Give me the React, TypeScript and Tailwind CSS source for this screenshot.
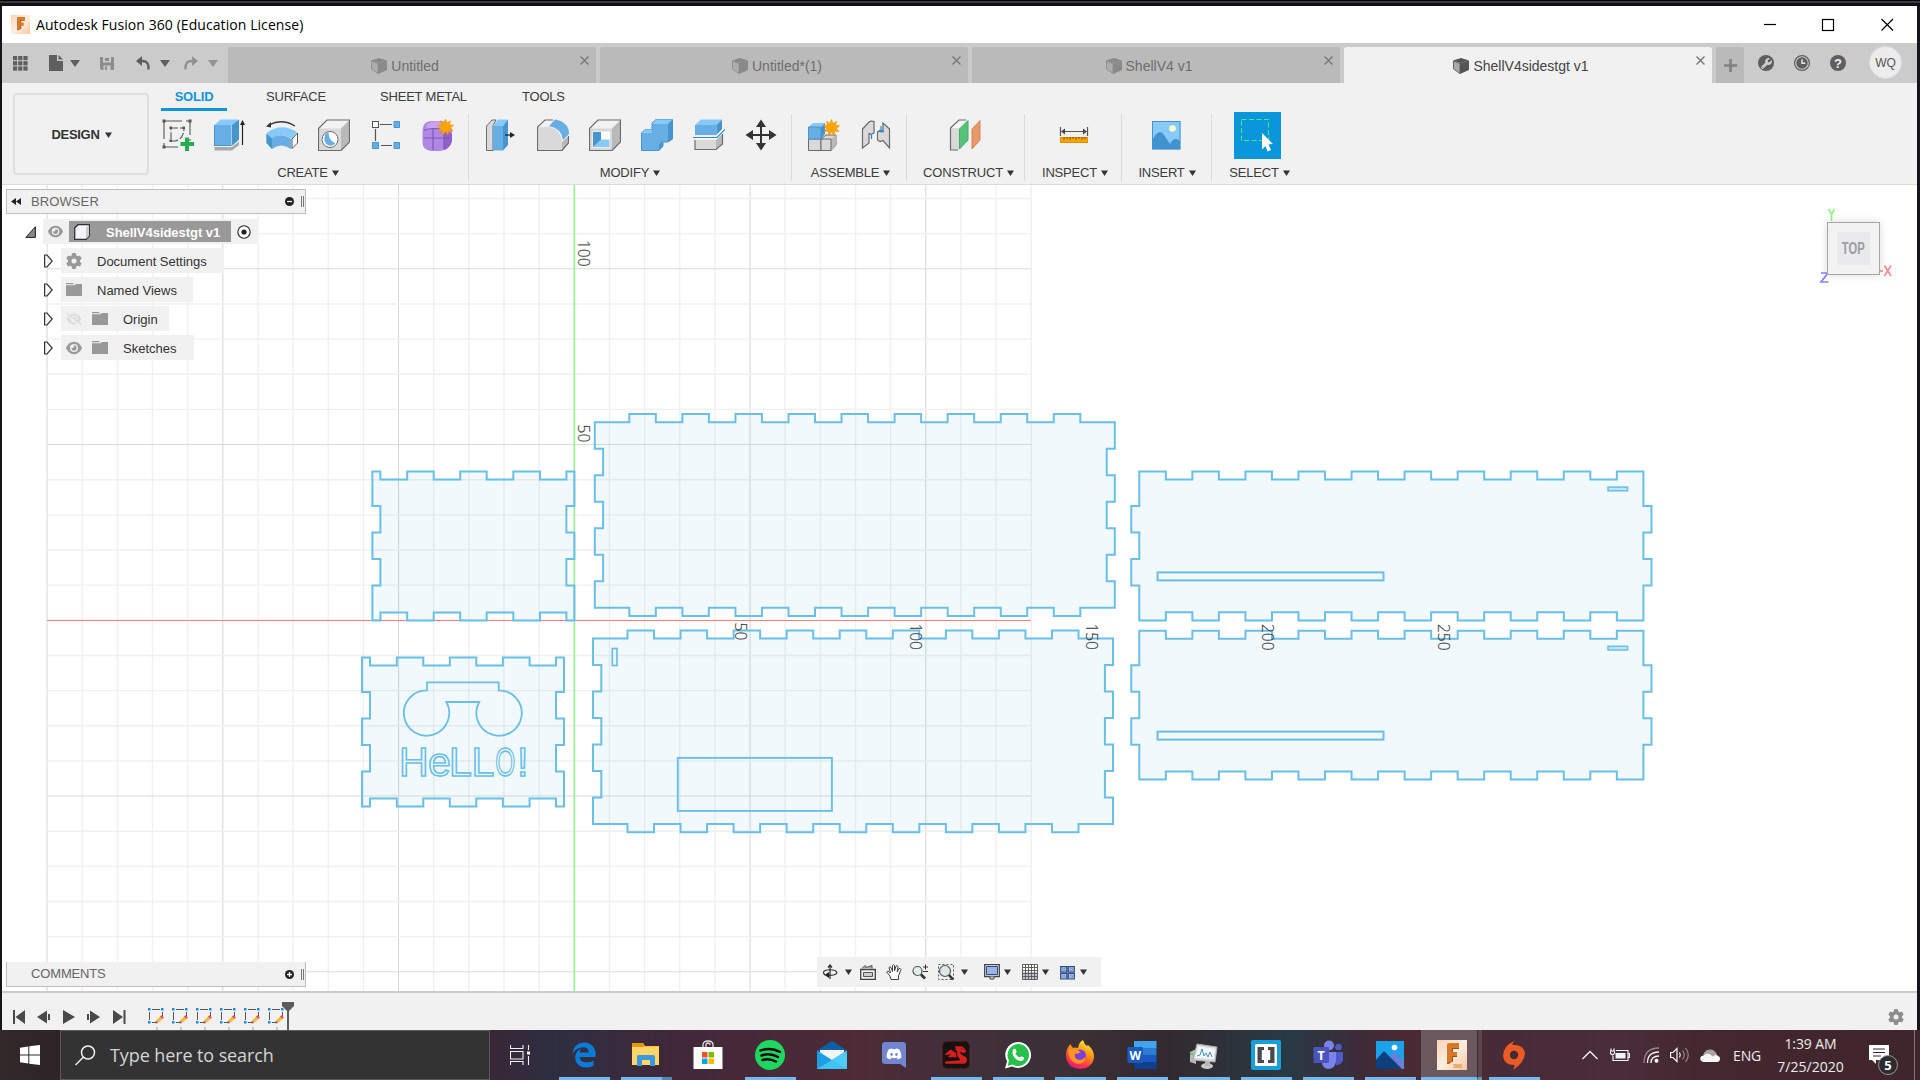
import React from "react";
import { FaEdgeLegacy, FaDiscord, FaDragon, FaWrench, FaGear, FaEye, FaEyeSlash } from "react-icons/fa6";

/* ---------- small helpers ---------- */

function Caret({ className = "" }: { className?: string }) {
  return (
    <svg className={"shrink-0 " + className} width="7" height="6" viewBox="0 0 7 6">
      <path d="M0 0.500H7L3.500 6Z" fill="currentColor" />
    </svg>
  );
}

function BigCaret({ className = "" }: { className?: string }) {
  return (
    <svg className={"shrink-0 " + className} width="10" height="7" viewBox="0 0 10 7">
      <path d="M0 0H10L5 7Z" fill="currentColor" />
    </svg>
  );
}

function Icon({ children, size = 32 }: { children: React.ReactNode; size?: number }) {
  return (
    <svg className="shrink-0" width={size} height={size} viewBox={`0 0 ${size} ${size}`} fill="none">
      {children}
    </svg>
  );
}

const STAR = "M0-8L1.600-4L5-6.300L4-2.200L8.200-1.800L5 1L7.500 4.200L3.300 3.600L2.600 8L0 4.600L-2.600 8L-3.300 3.600L-7.500 4.200L-5 1L-8.200-1.800L-4-2.200L-5-6.300L-1.600-4Z";

/* ---------- title bar ---------- */

function FusionMark({ size, label = false }: { size: number; label?: boolean }) {
  return (
    <svg width={size} height={size} viewBox="0 0 30 30" className="shrink-0">
      <defs>
        <linearGradient id="fm" x1="0" y1="0" x2="1" y2="1">
          <stop offset="0" stopColor="#f9d3b0" />
          <stop offset="0.5" stopColor="#fdeee0" />
          <stop offset="1" stopColor="#f6c79c" />
        </linearGradient>
      </defs>
      <rect width="30" height="30" fill="url(#fm)" />
      <path d="M10 4L15 3L16 21L12 24H10Z" fill="#9a5314" />
      <path d="M10 4Q13 3 14 3H22V8H15V12H20V16H15V22L10 23Z" fill="#d9782b" />
      <path d="M15 8H22V9H16V12H15ZM15 16H20V17H16V22H15Z" fill="#9a5314" />
      {label && (
        <text x="16" y="28" fontSize="5.500" fontWeight="700" fill="#e08b45" fontFamily="Liberation Sans, sans-serif">
          360
        </text>
      )}
    </svg>
  );
}

function TitleBar() {
  return (
    <div className="flex h-[37px] items-center bg-white pl-[9px]">
      <FusionMark size={19} />
      <span className="ml-[6px] whitespace-nowrap font-['Open_Sans',sans-serif] text-[14px] leading-[18px] tracking-[0.07px] text-black">
        Autodesk Fusion 360 (Education License)
      </span>
      <svg className="ml-auto mr-[23px]" width="131" height="14" viewBox="0 0 131 14" fill="none" stroke="#000" strokeWidth="1.200">
        <path d="M1 6.500H13" />
        <rect x="59.500" y="1.500" width="11" height="11" />
        <path d="M118.500 1L130 12.500M130 1L118.500 12.500" />
      </svg>
    </div>
  );
}

/* ---------- document tabs ---------- */

function DocCube({ active }: { active: boolean }) {
  return (
    <svg width="16" height="16" viewBox="0 0 16 16" className="shrink-0">
      <path d="M0 2.500L8 0L16 2.500L7 5Z" fill={active ? "#555" : "#8a8a8a"} />
      <path d="M0.500 3L7 5.500V15.500L0.500 11Z" fill={active ? "#aaa" : "#adadad"} stroke={active ? "#666" : "#909090"} />
      <path d="M7 5L16 2.500V12L7 16Z" fill={active ? "#555" : "#8a8a8a"} />
    </svg>
  );
}

function DocTab({ label, active = false }: { label: string; active?: boolean }) {
  return (
    <div
      className={
        "relative mr-1 flex h-9 w-[368px] items-center justify-center gap-[4px] rounded-t-[3px] pr-[14px] pt-[2px] " +
        (active ? "bg-[#f1f1f1] text-[#444]" : "bg-[#bababa] text-[#6d6d6d]")
      }
    >
      <DocCube active={active} />
      <span className="whitespace-nowrap text-[14px] leading-4">{label}</span>
      <svg className="absolute right-[7px] top-[9px]" width="9" height="9" viewBox="0 0 9 9" stroke="#777" strokeWidth="1.400">
        <path d="M0.500 0.500L8.500 8.500M8.500 0.500L0.500 8.500" />
      </svg>
    </div>
  );
}

function DocumentBar() {
  return (
    <div className="flex h-10 bg-[#cbcbcb] pt-1">
      <div className="flex h-8 w-[226px] shrink-0 items-center pl-[11px] text-[#5f5f5f]">
        <svg width="15" height="15" viewBox="0 0 15 15" fill="currentColor">
          {[0, 5.2, 10.4].map((y) => [0, 5.2, 10.4].map((x) => <rect key={x + "-" + y} x={x} y={y} width="4.200" height="4.200" />))}
        </svg>
        <svg className="ml-[21px]" width="14" height="16" viewBox="0 0 14 16" fill="currentColor">
          <path d="M0 0H8V6H14V16H0Z" />
          <path d="M9.500 0L14 4.500H9.500Z" />
        </svg>
        <BigCaret className="ml-[7px]" />
        <svg className="ml-[20px] text-[#8c8c8c]" width="14" height="15" viewBox="0 0 14 15">
          <path d="M0 1H14V14H1.500L0 12.500Z" fill="currentColor" />
          <path d="M3 1H11V6.500H3Z" fill="#cbcbcb" />
          <path d="M5 2H9V5H5Z" fill="currentColor" />
          <path d="M3.500 9.500H10.500V14H3.500Z" fill="#cbcbcb" />
          <path d="M5 10.500H7V14H5Z" fill="currentColor" />
        </svg>
        <svg className="ml-[22px]" width="14" height="14" viewBox="0 0 14 14" fill="none">
          <path d="M5 5H7Q13 5 12.500 13.500" stroke="currentColor" strokeWidth="2.400" />
          <path d="M0 5L6 0V10Z" fill="currentColor" />
        </svg>
        <BigCaret className="ml-[10px]" />
        <svg className="ml-[14px] text-[#929292]" width="14" height="14" viewBox="0 0 14 14" fill="none">
          <path d="M9 5H7Q1 5 1.500 13.500" stroke="currentColor" strokeWidth="2.400" />
          <path d="M14 5L8 0V10Z" fill="currentColor" />
        </svg>
        <BigCaret className="ml-[10px] text-[#929292]" />
      </div>
      <DocTab label="Untitled" />
      <DocTab label="Untitled*(1)" />
      <DocTab label="ShellV4 v1" />
      <DocTab label="ShellV4sidestgt v1" active />
      <div className="flex h-9 w-7 items-center justify-center rounded-t-[3px] bg-[#bababa]">
        <svg width="13" height="13" viewBox="0 0 13 13" stroke="#808080" strokeWidth="2.600">
          <path d="M6.500 0V13M0 6.500H13" />
        </svg>
      </div>
      <div className="ml-[14px] flex h-8 items-center gap-5">
        <div className="flex size-4 items-center justify-center overflow-hidden rounded-full bg-[#5e5e5e]">
          <FaWrench size={11} color="#cbcbcb" />
        </div>
        <svg width="16" height="16" viewBox="0 0 16 16" fill="none">
          <circle cx="8" cy="8" r="7.400" stroke="#5e5e5e" strokeWidth="1.200" />
          <circle cx="8" cy="8" r="5.700" fill="#5e5e5e" />
          <path d="M8 4.300V8.300H11.300" stroke="#e8e8e8" strokeWidth="1.400" />
        </svg>
        <div className="flex size-4 items-center justify-center rounded-full bg-[#5e5e5e] text-[13px] font-bold leading-none text-[#f1f1f1]">?</div>
      </div>
      <div className="-mt-px ml-[23px] flex size-[33px] items-center justify-center rounded-full border border-[#ddd] bg-[#ececec] text-[12px] text-[#555]">
        WQ
      </div>
    </div>
  );
}

/* ---------- ribbon icons ---------- */

const G = "#d9d9d9";
const D = "#6b6b6b";
const B = "#66aee3";
const BL = "#87cafa";
const BD = "#4795cd";

const SketchIcon = () => (
  <Icon>
    <path d="M2 2H28V22M2 2V28H16" stroke="#555" strokeWidth="1.100" strokeDasharray="18 4" />
    <path d="M9 9H22Q22 20 13 22H9Z" stroke="#555" strokeWidth="1.100" strokeDasharray="7 2" />
    <path d="M0.500 0.500H3.500V3.500H0.500ZM26.500 0.500H29.500V3.500H26.500ZM0.500 26.500H3.500V29.500H0.500ZM7.500 7.500H10V10H7.500ZM20.500 7.500H23V10H20.500ZM7.500 20.500H10V23H7.500Z" fill="#555" />
    <path d="M23 18.500H27V23H32V27H27V32H23V27H18.500V23H23Z" fill="#23ae4f" />
  </Icon>
);
const ExtrudeIcon = () => (
  <Icon>
    <path d="M0.500 28H18L25 22.500V26L18 31.500H0.500Z" fill="#aaa" />
    <path d="M0.500 6H17.500V26.500H0.500Z" fill={B} />
    <path d="M0.500 6L6.500 0.500H25L18 6Z" fill={BL} />
    <path d="M18 6L25 0.500V20.500L18 26.500Z" fill={BD} />
    <path d="M0.500 6V26.500H17.500L24.500 20.500" stroke={BD} />
    <path d="M28.500 26V4" stroke="#222" strokeWidth="1.200" />
    <path d="M26 6L28.500 1L31 6Z" fill="#222" />
  </Icon>
);
const RevolveIcon = () => (
  <Icon>
    <path d="M3 6Q16-1 29 7" stroke="#333" strokeWidth="1.300" />
    <path d="M0 7.500L5 3V8.500Z" fill="#333" />
    <path d="M0.500 14Q15 3 31 13L25.500 20Q14 12 6 21L0.500 16Z" fill={BL} />
    <path d="M0.500 15L6 19.500Q15 13 25 20V30Q15 23 6 30L0.500 24Z" fill={B} />
    <path d="M0.500 15L6 19.500V30L0.500 24Z" fill={BD} />
    <path d="M26 20L31.500 14V24L26 29.500Z" fill="#fff" stroke="#555" />
  </Icon>
);
const Block = ({ children }: { children?: React.ReactNode }) => (
  <>
    <path d="M0.500 9.500L9 1H31.500L23 9.500Z" fill="#f3f3f3" />
    <path d="M0.500 9.500H23V31.500H0.500Z" fill={G} />
    <path d="M23 9.500L31.500 1V23L23 31.500Z" fill="#b9b9b9" />
    <path d="M0.500 9.500L9 1H31.500V23L23 31.500H0.500Z" stroke={D} strokeWidth="1.200" />
    {children}
  </>
);
const HoleIcon = () => (
  <Icon>
    <Block>
      <circle cx="12" cy="20.500" r="8" fill="#fff" stroke={D} />
      <path d="M7.500 15Q4.500 22 9 25.500Q14 28.500 17.500 24Q10.500 22 10.500 13.500Q8.500 14 7.500 15Z" fill={B} />
    </Block>
  </Icon>
);
const PatternIcon = () => (
  <Icon>
    <path d="M10 5.500H22M5.500 10V22M11 26.500H22" stroke="#555" strokeWidth="1.200" />
    <rect x="2.500" y="2.500" width="6" height="6" fill="#fff" stroke="#555" />
    <path d="M24 2.500H29.500V8.500H24ZM2.500 23.500H8.500V29.500H2.500ZM24 23.500H29.500V29.500H24Z" fill={B} stroke={BD} />
  </Icon>
);
const FormIcon = () => (
  <Icon>
    <path d="M0.500 13Q0.500 2 10 2H20Q30 4 30 14V22Q28 31 18 32H9Q0.500 31 0.500 23Z" fill="#b087e4" />
    <path d="M5 5Q12 0 24 4L20 9Q10 8 4 10Z" fill="#c9a2f5" />
    <path d="M22 12Q28 12 30 16V22Q28 29 22 31Z" fill="#9160cc" />
    <path d="M2 19H28M11 9V31M2 11Q12 8 22 11V30" stroke="#7d53b5" strokeWidth="1.100" />
    <path d={STAR} transform="translate(23.500 8)" fill="#ffa400" stroke="#e38d00" strokeWidth="0.500" />
  </Icon>
);
const PressPullIcon = () => (
  <Icon>
    <path d="M1.500 7L7 1H11L8 7V31.500H1.500Z" fill={G} stroke={D} />
    <path d="M8 7H18V31.500H8Z" fill={B} />
    <path d="M8 7L13 0.500H23L18 7Z" fill={BL} />
    <path d="M18 7L23 0.500V26L18 31.500Z" fill={BD} />
    <path d="M20 16H26" stroke="#222" strokeWidth="1.200" />
    <path d="M25 13L30 16L25 19Z" fill="#222" />
  </Icon>
);
const FilletIcon = () => (
  <Icon>
    <path d="M0.500 8L8 1H16L13 7Z" fill="#f3f3f3" />
    <path d="M0.500 8H12Q24 10 25 24L25 31.500H0.500Z" fill={G} />
    <path d="M25 23L31.500 17V24L25 31.500Z" fill="#b9b9b9" />
    <path d="M16 1L8 1L0.500 8V31.500H25L31.500 24V17" stroke={D} strokeWidth="1.200" />
    <path d="M12 7L18 0.500Q32 3 32 15L26 21Q24 9 12 7Z" fill={B} />
  </Icon>
);
const ShellIcon = () => (
  <Icon>
    <Block>
      <path d="M3.500 12.500H21V28.500H3.500Z" fill="#fff" />
      <path d="M4 13H12V22L4 28Z" fill={BD} />
      <path d="M4 28L12 20.500H20.500V28Z" fill={BL} />
    </Block>
  </Icon>
);
const CombineIcon = () => (
  <Icon>
    <path d="M0.500 14L4 10.500H11V4L15 0.500H31.500V20L27 23H22V27L18 31.500H0.500Z" fill={B} stroke={BD} />
    <path d="M11 5L15 0.500H31.500L27.500 5ZM1 14L4 10.500H11V14Z" fill={BL} />
    <path d="M27 5L31.500 0.500V20L27 23ZM18 25L22 22V27L18 31.500Z" fill={BD} />
  </Icon>
);
const SplitIcon = () => (
  <Icon>
    <path d="M2 6L8 0.500H29L23.500 6Z" fill={BL} />
    <path d="M2 6H23.500V16H2Z" fill={B} />
    <path d="M23.500 6L29 0.500V10L23.500 16Z" fill={BD} />
    <path d="M2 21H23V30.500H2Z" fill={G} />
    <path d="M23 21L29 15V25L23 30.500Z" fill="#b9b9b9" />
    <path d="M2 21V30.500H23L29.500 25V15" stroke={D} strokeWidth="1.200" />
    <path d="M0 18.500H23L32 10" stroke="#fff" strokeWidth="3" />
    <path d="M0 18.500H24L32 10.500" stroke="#1b8de0" strokeWidth="1.200" />
  </Icon>
);
const MoveIcon = () => (
  <Icon>
    <path d="M16 5V27M5 16H27" stroke="#333" strokeWidth="2" />
    <path d="M16 0.500L21 8H11ZM16 31.500L21 24H11ZM0.500 16L8 11V21ZM31.500 16L24 11V21Z" fill="#333" />
  </Icon>
);
const ComponentIcon = () => (
  <Icon>
    <path d="M0.500 20H15V31.500H0.500ZM13 20L18 16H28V26L23 31.500H13Z" fill={G} stroke={D} />
    <path d="M23 20L28 16V26L23 31.500Z" fill="#b9b9b9" />
    <path d="M13 20H23V31.500H13Z" stroke={D} fill={G} />
    <path d="M0.500 8L5 4H17L13 8Z" fill={BL} />
    <path d="M0.500 8H13V20H0.500Z" fill={B} stroke={BD} />
    <path d="M13 8L17 4V15L13 20Z" fill={BD} />
    <path d={STAR} transform="translate(23.500 8.500)" fill="#ffa400" stroke="#e38d00" strokeWidth="0.500" />
  </Icon>
);
const JointIcon = () => (
  <Icon>
    <path d="M2.500 10L9 3Q11 1.500 14 2.500V14L11 15.500L9 14.500V24L2.500 29Z" fill={G} stroke={D} strokeWidth="1.200" />
    <path d="M29.500 10L23 4V13L20 12L17.500 13V21L20 22.500L23 21.500L29.500 29Z" fill={G} stroke={D} strokeWidth="1.200" />
    <path d="M11.500 15V20M21 7V13M19 11L21 13L23 11" stroke="#1b8de0" strokeWidth="1.200" />
  </Icon>
);
const ConstructIcon = () => (
  <Icon>
    <path d="M1.500 9L10 1H17L10 9V31H1.500Z" fill={G} />
    <path d="M1.500 9L10 1H17L10 9Z" fill="#f7f7f7" />
    <path d="M17 1H10L1.500 9V31H9" stroke={D} strokeWidth="1.200" />
    <path d="M10.500 10L19 1.500V21L10.500 30Z" fill="#56c478" stroke="#3fae62" />
    <path d="M23 10L31 1.500V21L23 30Z" fill="#e59a68" stroke="#d68550" />
  </Icon>
);
const InspectIcon = () => (
  <Icon>
    <path d="M2.500 8V17M29.500 8V17M4 12.500H28" stroke="#555" strokeWidth="1.200" />
    <path d="M3 12.500L7 9.500V15.500ZM29 12.500L25 9.500V15.500Z" fill="#444" />
    <rect x="2.500" y="18.500" width="27" height="5" fill="#ffa400" stroke="#e08f00" />
    <path d="M6 18V21M9 18V20M12 18V21M15 18V20M18 18V21M21 18V20M24 18V21M27 18V20" stroke="#7a5200" />
  </Icon>
);
const InsertIcon = () => (
  <Icon>
    <rect x="2" y="2" width="28.500" height="28.500" fill={BL} />
    <path d="M2.500 21Q9 8 14 16L20 25Q24 17 30 22V30H2.500Z" fill="#3f93cf" />
    <circle cx="22.500" cy="9.500" r="3.300" fill="#fffad0" />
    <rect x="2.500" y="2.500" width="27.500" height="27.500" stroke="#3f93cf" />
  </Icon>
);
const SelectIcon = () => (
  <svg width="47" height="47" viewBox="0 0 47 47" className="bg-[#0a96db]">
    <rect x="7.500" y="7.500" width="27" height="21" fill="none" stroke="#5ce07c" strokeDasharray="5 2.500" strokeWidth="1.100" />
    <path d="M28 21L39 32L34.500 32.500L37 38L33.500 39.500L31.500 34L28 37.500Z" fill="#fff" />
  </svg>
);

function Group({
  label,
  width,
  children,
  last = false,
  iconShift = "pb-[2px] pr-[2px]",
  labelShift = "",
}: {
  label: string;
  width: string;
  children: React.ReactNode;
  last?: boolean;
  iconShift?: string;
  labelShift?: string;
}) {
  return (
    <div className={"relative flex h-[73px] shrink-0 flex-col items-center " + width}>
      <div className={"flex h-[49px] items-center gap-5 " + iconShift}>{children}</div>
      <div className={"mt-[5px] flex items-center gap-[4px] whitespace-nowrap text-[13px] leading-4 tracking-[-0.2px] text-[#3c3c3c] " + labelShift}>
        {label}
        <Caret className="text-[#333]" />
      </div>
      {!last && <div className="absolute right-0 top-[3px] h-[67px] w-px bg-[#dadada]" />}
    </div>
  );
}

function Ribbon() {
  return (
    <div className="flex h-[102px] border-b border-[#dcdcdc] bg-[#f1f1f1]">
      <div className="ml-[11px] mt-[10px] flex h-[82px] w-[136px] shrink-0 items-center justify-center gap-[5px] rounded-[4px] border-2 border-[#dedede] pl-px pt-px text-[13px] font-bold tracking-[-0.3px] text-[#333]">
        DESIGN
        <Caret />
      </div>
      <div className="flex flex-col">
        <div className="flex h-7 text-[13px] leading-[15px] tracking-[-0.2px] text-[#3c3c3c]">
          <div className="ml-[12px] h-7 w-[66px] border-b-[3px] border-[#1096d8] pt-[6px] text-center font-bold text-[#1096d8]">SOLID</div>
          <div className="ml-[39px] w-[114px] pt-[6px]">SURFACE</div>
          <div className="w-[142px] whitespace-nowrap pt-[6px]">SHEET METAL</div>
          <div className="pt-[6px]">TOOLS</div>
        </div>
        <div className="flex">
          <Group label="CREATE" width="w-[320px]" labelShift="pr-[2px]">
            <SketchIcon />
            <ExtrudeIcon />
            <RevolveIcon />
            <HoleIcon />
            <PatternIcon />
            <FormIcon />
          </Group>
          <Group label="MODIFY" width="w-[323px]" iconShift="pb-[2px]" labelShift="pr-px">
            <PressPullIcon />
            <FilletIcon />
            <ShellIcon />
            <CombineIcon />
            <SplitIcon />
            <MoveIcon />
          </Group>
          <Group label="ASSEMBLE" width="w-[115px]" iconShift="pb-[2px]" labelShift="pl-[2px]">
            <ComponentIcon />
            <JointIcon />
          </Group>
          <Group label="CONSTRUCT" width="w-[118px]" labelShift="pl-[5px]">
            <ConstructIcon />
          </Group>
          <Group label="INSPECT" width="w-[97px]" iconShift="pb-[2px]" labelShift="pl-[3px]">
            <InspectIcon />
          </Group>
          <Group label="INSERT" width="w-[90px]">
            <InsertIcon />
          </Group>
          <Group label="SELECT" width="w-[92px]" last iconShift="pr-[2px]" labelShift="pl-[3px]">
            <SelectIcon />
          </Group>
        </div>
      </div>
    </div>
  );
}

/* ---------- drawing canvas ---------- */

const STEP = 35.15;
const AX = 574.3;
const AY = 620.3;
const PITCH = 26.53;

const pts = (list: number[][]) => list.map((p) => p.join(",")).join(" ");

/* Runs along an edge from point to point, switching between two levels at every stop. */
function edge(stops: number[], levels: [number, number], first: 0 | 1, horizontal: boolean) {
  const out: number[][] = [];
  let side: number = first;
  for (let i = 0; i < stops.length - 1; i++) {
    const l = levels[side];
    out.push(horizontal ? [stops[i], l] : [l, stops[i]]);
    out.push(horizontal ? [stops[i + 1], l] : [l, stops[i + 1]]);
    side = 1 - side;
  }
  return out;
}
const rev = (a: number[]) => [...a].reverse();

const endXs = [372.4, 380.4, 407.2, 433.7, 460.2, 486.7, 513.3, 540, 566.4, 574.4];
const endYs = [471.4, 506, 532.6, 559.1, 585.5, 620.4];
const endPlate = pts([
  ...edge(endXs, [471.4, 479.4], 0, true),
  ...edge(endYs, [574.4, 566.4], 0, false),
  ...edge(rev(endXs), [620.4, 612.4], 0, true),
  ...edge(rev(endYs), [372.4, 380.4], 0, false),
]);

const wideXs = [594.8, ...Array.from({ length: 18 }, (_, i) => 629.3 + i * PITCH), 1114.8];
const wideYs = Array.from({ length: 8 }, (_, i) => 422.3 + i * 26.5);
const widePlate = pts([
  ...edge(wideXs, [422.3, 414.1], 0, true),
  ...edge(wideYs, [1114.8, 1106.7], 0, false),
  ...edge(rev(wideXs), [607.8, 616], 0, true),
  ...edge(rev(wideYs), [594.8, 603.1], 0, false),
]);

const sideXs = Array.from({ length: 20 }, (_, i) => 1139.3 + i * PITCH);
const sideYs = [471.6, 506, 532.6, 559.1, 585.6, 620.4];
const sidePlate = pts([
  ...edge(sideXs, [471.6, 479.6], 0, true),
  ...edge(sideYs, [1643.4, 1651.5], 0, false),
  ...edge(rev(sideXs), [620.4, 612.3], 0, true),
  ...edge(rev(sideYs), [1139.3, 1131.3], 0, false),
]);

function SidePlate({ dy }: { dy: number }) {
  return (
    <g transform={`translate(0 ${dy})`}>
      <polygon points={sidePlate} />
      <rect x="1157.500" y="572.400" width="226" height="8" fill="none" />
      <rect x="1608" y="487.100" width="19.600" height="3.700" fill="#0a96db" fillOpacity="0.200" strokeWidth="1.500" />
    </g>
  );
}

function Drawing() {
  const gridX: number[] = [];
  for (let i = -15; i <= 13; i++) gridX.push(i);
  const gridY: number[] = [];
  for (let i = -12; i <= 10; i++) gridY.push(i);
  const labels: [string, number, number][] = [
    ["100", 578.3, 240],
    ["50", 578.3, 424.6],
    ["50", 735.2, 622.6],
    ["100", 910.3, 623.4],
    ["150", 1086.3, 623.4],
    ["200", 1262, 624],
    ["250", 1437.6, 624],
  ];
  return (
    <svg className="block" width="1915" height="806" viewBox="2 185 1915 806" fill="none">
      {gridX.map((i) => (
        <path key={"v" + i} d={`M${AX + i * STEP} 185V991`} stroke={i % 5 === 0 ? "#d9d9da" : "#f0f0f0"} strokeWidth={i % 5 === 0 ? 1.1 : 1.4} />
      ))}
      {gridY.map((i) => (
        <path key={"h" + i} d={`M47 ${AY + i * STEP}H1031`} stroke={i % 5 === 0 ? "#dcdcdd" : "#f0f0f0"} strokeWidth={i % 5 === 0 ? 1.1 : 1.4} />
      ))}
      <path d="M47 620.500H1031" stroke="#f98080" strokeWidth="1" />
      <path d="M574.400 185V991" stroke="#92f292" strokeWidth="1.500" />
      <g stroke="#69bfe6" strokeWidth="2" fill="#0a96db" fillOpacity="0.058">
        <polygon points={endPlate} />
        <polygon points={widePlate} />
        <g transform="translate(-1.800 216.300)">
          <polygon points={widePlate} />
        </g>
        <g transform="translate(-10.400 186)">
          <polygon points={endPlate} />
        </g>
        <SidePlate dy={0} />
        <SidePlate dy={159.2} />
        <g fill="none" strokeWidth="1.900">
          <rect x="612.300" y="648.500" width="4.700" height="17" strokeWidth="1.700" />
          <rect x="677.800" y="757.900" width="154.100" height="53" />
          <path d="M427 690.300V682.400H498.700V690.300A22.700 22.700 0 1 1 479.200 702H446.400A22.700 22.700 0 1 1 427 690.300Z" strokeWidth="1.800" />
        </g>
      </g>
      <g fill="none" stroke="#69bfe6" strokeWidth="1.600" fontFamily="Liberation Sans, Arial, sans-serif" fontSize="41">
        <text x="399 428 449 471.500" y="776">HeLL</text>
        <text x="495.300" y="776" textLength="20" lengthAdjust="spacingAndGlyphs">O</text>
        <text x="517" y="776">!</text>
      </g>
      <g fill="#3f3f3f" fontFamily="Open Sans, sans-serif" fontWeight="300" fontSize="15.500" stroke="#3f3f3f" strokeWidth="0.150">
        {labels.map(([t, x, y]) => (
          <text key={t + x} transform={`translate(${x} ${y}) rotate(90)`}>
            {t}
          </text>
        ))}
      </g>
    </svg>
  );
}

/* ---------- canvas overlays ---------- */

function Handle() {
  return <div className="mr-[1px] ml-[7px] h-[11px] w-[3px] border-x border-[#777]" />;
}

function Knob({ plus = false }: { plus?: boolean }) {
  return (
    <svg className="ml-auto" width="9" height="9" viewBox="0 0 9 9">
      <circle cx="4.500" cy="4.500" r="4.500" fill="#222" />
      <path d={plus ? "M2 4.500H7M4.500 2V7" : "M2 4.500H7"} stroke="#fff" strokeWidth="1.300" />
    </svg>
  );
}

function Expander() {
  return (
    <svg className="mr-[8px] shrink-0" width="9" height="14" viewBox="0 0 9 14">
      <path d="M0.600 1H3L8.300 7L3 13H0.600Z" fill="#f6f6f6" stroke="#333" strokeWidth="1.200" />
    </svg>
  );
}

function TreeRow({ label, width, children }: { label: string; width: string; children: React.ReactNode }) {
  return (
    <div className="mb-1 flex h-[25px] items-center pl-[38px]">
      <Expander />
      <div className={"flex h-[25px] items-center bg-[#f1f1f1] pl-[5px] " + width}>
        {children}
        <span className="ml-[15px] whitespace-nowrap pt-[2px] text-[13px] leading-4 text-[#333]">{label}</span>
      </div>
    </div>
  );
}

const Folder = () => (
  <svg className="shrink-0" width="16" height="13" viewBox="0 0 16 13" fill="#999">
    <path d="M0 0H7L8 1.200H0ZM0 2.200H8.500L10 1H16V13H0Z" />
  </svg>
);

function Browser() {
  return (
    <div className="absolute left-[4px] top-[4px] w-[300px]">
      <div className="flex h-[25px] items-center border border-[#bdbdbd] bg-[#f1f1f1] pl-[4px]">
        <svg width="10" height="7" viewBox="0 0 10 7">
          <path d="M5 0V7L0 3.500ZM10 0V7L5 3.500Z" fill="#222" />
        </svg>
        <span className="ml-[10px] text-[13px] leading-4 tracking-[0.1px] text-[#666]">BROWSER</span>
        <Knob />
        <Handle />
      </div>
      <div className="mb-1 mt-[5px] flex h-[25px] items-center pl-[19px]">
        <svg className="mr-[7px]" width="11" height="12" viewBox="0 0 11 12">
          <path d="M10.400 0.800V11.400H0.800Z" fill="#888" stroke="#222" />
        </svg>
        <div className="flex h-[25px] w-[214px] items-center bg-[#f1f1f1] pl-[5px]">
          <FaEye size={15} color="#999" />
          <div className="ml-[6px] flex h-[21px] w-[162px] items-center bg-[#999] pl-[5px]">
            <svg width="16" height="16" viewBox="0 0 16 16">
              <path d="M0.700 4L4 0.700H15.300V12L12 15.300H0.700Z" fill="#f4f5f8" stroke="#333" strokeWidth="1.300" />
              <path d="M12 4L15 1V12L12 15Z" fill="#c8cad4" />
            </svg>
            <span className="ml-[16px] whitespace-nowrap pt-[2px] text-[13px] font-bold leading-4 tracking-[-0.04px] text-white">ShellV4sidestgt v1</span>
          </div>
          <svg className="ml-[6px]" width="14" height="14" viewBox="0 0 14 14">
            <circle cx="7" cy="7" r="6.200" fill="#fff" stroke="#222" strokeWidth="1.100" />
            <circle cx="7" cy="7" r="2.600" fill="#222" />
          </svg>
        </div>
      </div>
      <TreeRow label="Document Settings" width="w-[162px]">
        <FaGear size={16} color="#999" />
      </TreeRow>
      <TreeRow label="Named Views" width="w-[132px]">
        <Folder />
      </TreeRow>
      <TreeRow label="Origin" width="w-[108px]">
        <FaEyeSlash size={16} color="#dcdcdc" className="mr-[10px]" />
        <Folder />
      </TreeRow>
      <TreeRow label="Sketches" width="w-[133px]">
        <FaEye size={16} color="#999" className="mr-[10px]" />
        <Folder />
      </TreeRow>
    </div>
  );
}

function Comments() {
  return (
    <div className="absolute left-[4px] top-[777px] flex h-[25px] w-[300px] items-center border border-t-0 border-[#bdbdbd] bg-[#f1f1f1] pl-[24px]">
      <span className="text-[13px] leading-4 tracking-[-0.15px] text-[#666]">COMMENTS</span>
      <Knob plus />
      <Handle />
    </div>
  );
}

function ViewCube() {
  return (
    <div className="absolute left-[1816px] top-[20px] h-[82px] w-[78px]">
      <svg width="78" height="82" viewBox="0 0 78 82" fill="none" strokeWidth="1.700">
        <path d="M10.500 4L13.500 9.500L16.500 4M13.500 9.500V16" stroke="#8df58d" />
        <path d="M66.500 60.500L73 71M73 60.500L66.500 71M62 66H65" stroke="#fb8a8a" />
        <path d="M3 68H10L3 77H10.500" stroke="#8585fb" />
      </svg>
      <div className="absolute left-[9px] top-[17px] flex size-[53px] items-center justify-center border border-[#a5a5a5] bg-[#f2f2f2] shadow-[0_0_8px_rgba(0,0,0,0.15)]">
        <div className="flex size-[33px] items-center justify-center bg-[#e8eaec] text-[13px] font-bold tracking-[0px] text-[#9a9da1]">
          <span className="scale-x-[0.86] scale-y-[1.2] pt-px">TOP</span>
        </div>
      </div>
    </div>
  );
}

function NavBar() {
  return (
    <div className="absolute left-[815px] top-[772px] flex h-[30px] w-[284px] items-center bg-[#f1f1f1] pl-[5px] text-[#333]">
      <Icon size={16}>
        <path d="M8 1V15M6 3.500L8 1L10 3.500" stroke="#333" strokeWidth="1.300" />
        <path d="M3 11Q0 8 3 6.500Q8 5 13 6.500Q16 8 14 10Q11 12 4 11" stroke="#333" strokeWidth="1.200" />
        <path d="M7 8L2.500 11L7 14Z" fill="#222" />
      </Icon>
      <Caret className="ml-[7px]" />
      <span className="ml-[8px]">
        <Icon size={16}>
          <path d="M0.700 5.500H15.300V15.300H0.700Z" fill="#eef0f2" stroke="#444" strokeWidth="1.300" />
          <path d="M3.500 8.500H12.500V12.500H3.500Z" fill="#ccc" stroke="#555" />
          <path d="M2 4.500L5 1.500L6 3.500L12 1.500V4.500" fill="#aaa" stroke="#555" />
        </Icon>
      </span>
      <span className="ml-[10px]">
        <Icon size={16}>
          <path d="M5 15.500L4 12L0.700 8Q1.500 6.500 3.500 8L4.500 9L3 3.500Q4 2 5 3.500L6.500 7.500V1.500Q7.500 0 8.500 1.500V7L10 2Q11.500 1 12 2.500L11.200 8L13 4.500Q14.500 4 15 5.500L12.500 12V15.500Z" fill="#fff" stroke="#444" />
        </Icon>
      </span>
      <span className="ml-[10px]">
        <Icon size={16}>
          <circle cx="5.500" cy="7" r="4.500" fill="#dff0f2" stroke="#555" strokeWidth="1.200" />
          <path d="M9 10.500L13 14.500" stroke="#333" strokeWidth="2.600" />
          <path d="M11 3H16M13.500 0.500V5.500M11 7.500H16" stroke="#333" />
        </Icon>
      </span>
      <span className="ml-[10px]">
        <Icon size={16}>
          <path d="M0.500 0.500H15.500V15.500H0.500Z" stroke="#555" strokeDasharray="2 2" />
          <circle cx="7" cy="7" r="5.500" fill="#d8e9e8" stroke="#555" strokeWidth="1.200" />
          <path d="M11 11L15 15.500" stroke="#333" strokeWidth="2.600" />
        </Icon>
      </span>
      <Caret className="ml-[7px]" />
      <span className="ml-[16px]">
        <Icon size={16}>
          <path d="M0.700 0.700H15.300V12.500H0.700Z" fill="#f4f4f4" stroke="#444" strokeWidth="1.300" />
          <path d="M2.500 2.500H13.500V10.500H2.500Z" fill="#9cb7e6" stroke="#2d4a83" />
          <path d="M6 12.500V15H10V12.500" fill="#ccc" stroke="#444" />
        </Icon>
      </span>
      <Caret className="ml-[4px]" />
      <span className="ml-[11px]">
        <Icon size={16}>
          <path d="M0.500 0.500H15.500V15.500H0.500Z" fill="#fff" />
          <path d="M0.500 8H15.500V15.500H0.500Z" fill="#c3c8d2" />
          <path d="M0.500 0.500H15.500V15.500H0.500ZM3.500 0V16M6.500 0V16M9.500 0V16M12.500 0V16M0 3.500H16M0 6.500H16M0 9.500H16M0 12.500H16" stroke="#555" strokeWidth="0.900" />
        </Icon>
      </span>
      <Caret className="ml-[4px]" />
      <span className="ml-[11px]">
        <Icon size={15}>
          <path d="M0.700 1.700H6.800V7.200H0.700ZM8.200 1.700H14.300V7.200H8.200ZM0.700 8.500H6.800V14H0.700ZM8.200 8.500H14.300V14H8.200Z" fill="#b3c8ee" stroke="#2d4a83" strokeWidth="1.200" />
          <path d="M2.500 3.500H5V5.500H2.500ZM10 3.500H12.500V5.500H10ZM2.500 10.300H5V12.300H2.500ZM10 10.300H12.500V12.300H10Z" stroke="#6f8cc4" strokeWidth="0.800" />
        </Icon>
      </span>
      <Caret className="ml-[5px]" />
    </div>
  );
}

function Canvas() {
  return (
    <div className="relative h-[806px] overflow-hidden bg-white">
      <Drawing />
      <Browser />
      <Comments />
      <ViewCube />
      <NavBar />
    </div>
  );
}

/* ---------- timeline ---------- */

function Timeline() {
  return (
    <div className="flex h-[39px] border-t-2 border-[#cbcbcb] bg-[#f1f1f1]">
      <svg className="ml-[11px] mt-[17px]" width="113" height="14" viewBox="0 0 113 14" fill="#4a4a4a">
        <path d="M0 0H2V14H0ZM12 0V14L2.500 7Z" />
        <path d="M34 0.500V13.500L24 7ZM35 4H37V10H35Z" />
        <path d="M50 0L62 7L50 14Z" />
        <path d="M74 4H76V10H74ZM77 0.500L87 7L77 13.500Z" />
        <path d="M100 0L110 7L100 14ZM110.500 0H112.500V14H110.500Z" />
      </svg>
      <svg className="ml-[22px] mt-[9px]" width="148" height="28" viewBox="0 0 148 28" fill="none">
        {[0, 24, 48, 72, 96, 120].map((x) => (
          <g key={x} transform={`translate(${x} 6)`}>
            <path d="M4 1.500H12M14.500 4V9M1.500 4V12M4 14.500H8" stroke="#555" />
            <path d="M0 0H2.500V2.500H0ZM13 0H15.500V2.500H13ZM0 13H2.500V15.500H0Z" fill="#1b8de0" />
            <path d="M9.500 13.500L13.500 9.500" stroke="#ffb937" strokeWidth="3.400" />
            <path d="M13.200 9.800L14.600 8.400" stroke="#f5484d" strokeWidth="3.400" />
            <path d="M7.500 13H9.500V15.500H7.500Z" fill="#777" />
            <path d="M8 19H10V22H8Z" fill="#c6c6c6" />
          </g>
        ))}
        <path d="M134 0H146V4L141 9V28H139V9L134 4Z" fill="#5c5c5c" />
      </svg>
      <FaGear className="ml-auto mr-[13px] mt-4" size={16} color="#8d8d8d" />
    </div>
  );
}

/* ---------- taskbar ---------- */

function App30({ children }: { children: React.ReactNode }) {
  return (
    <svg width="30" height="30" viewBox="0 0 30 30" fill="none">
      {children}
    </svg>
  );
}

const Explorer = () => (
  <App30>
    <path d="M1 3H12L14 6H28V25H1Z" fill="#f8c53d" />
    <path d="M1 3H12L14 6L12 7H1Z" fill="#e29a0c" />
    <path d="M1 7H28V25H1Z" fill="#ffd667" />
    <path d="M6 26V17Q6 15 8 15H22Q24 15 24 17V26H19V20H11V26Z" fill="#3a99e0" />
  </App30>
);
const Store = () => (
  <App30>
    <path d="M10 8V5Q10 1 15 1Q20 1 20 5V8M13 8V5Q13 3 15 3Q17 3 17 5" stroke="#ddd" strokeWidth="1.300" />
    <path d="M0.500 7H29.500V29H0.500Z" fill="#fff" />
    <rect x="9" y="12" width="5.500" height="5.500" fill="#f25022" />
    <rect x="15.500" y="12" width="5.500" height="5.500" fill="#7fba00" />
    <rect x="9" y="18.500" width="5.500" height="5.500" fill="#00a4ef" />
    <rect x="15.500" y="18.500" width="5.500" height="5.500" fill="#ffb900" />
  </App30>
);
const Spotify = () => (
  <App30>
    <circle cx="15" cy="15" r="15" fill="#1ed760" />
    <path d="M5.500 10.500Q16 7 25 12M6.500 15.500Q15 12.500 23 17M7.500 20Q14 17.700 21 21.500" stroke="#0b0b0b" strokeWidth="2.500" strokeLinecap="round" />
  </App30>
);
const Mail = () => (
  <App30>
    <path d="M0 10.500L15 1L30 10.500V14H0Z" fill="#0f5fa6" />
    <path d="M3 10H27V22H3Z" fill="#f5f5f5" />
    <path d="M0 10.500L15 20L30 10.500V29H0Z" fill="#1d9fe6" />
    <path d="M0 29L30 11V29Z" fill="#3fc3f5" />
    <path d="M15 20L30 29V10.500Z" fill="#54d3fa" fillOpacity="0.600" />
  </App30>
);
const Discord = () => (
  <div className="relative flex h-[26px] w-6 items-start justify-center">
    <svg width="24" height="26" viewBox="0 0 24 26">
      <path d="M3 0H21Q24 0 24 3V26L18 22H3Q0 22 0 19V3Q0 0 3 0Z" fill="#7185d0" />
    </svg>
    <FaDiscord className="absolute left-[4px] top-[4px]" size={16} color="#fff" />
  </div>
);
const Msi = () => (
  <div className="flex size-7 items-center justify-center rounded-[5px] border border-[#5b1016] bg-[#151212]">
    <FaDragon size={22} color="#d81e1e" />
  </div>
);
const WhatsApp = () => (
  <svg width="28" height="28" viewBox="0 0 28 28">
    <path d="M14 1A13 13 0 1 1 8 25.500L1 27.500L3 20.500A13 13 0 0 1 14 1Z" fill="#fff" />
    <path d="M14 3A11 11 0 1 1 8.500 23.500L3.500 25L5 19.500A11 11 0 0 1 14 3Z" fill="#27c04c" />
    <path d="M9.500 8Q11 7 12 9L12.500 11Q12 12 11.500 12.500Q13 15.500 16 16.500L17.300 15.300L20 16.500Q20.500 19 17.500 20Q14 20.500 10.500 16.500Q7 12 9.500 8Z" fill="#fff" />
  </svg>
);
const Firefox = () => (
  <App30>
    <defs>
      <linearGradient id="ff" x1="0.800" y1="0" x2="0.300" y2="1">
        <stop offset="0" stopColor="#fff44f" />
        <stop offset="0.400" stopColor="#ff980e" />
        <stop offset="0.750" stopColor="#ff3647" />
        <stop offset="1" stopColor="#e31587" />
      </linearGradient>
    </defs>
    <path d="M1 16Q1 9 4 6L5 4L8 8Q10 7 13 8Q14 2 18 0Q19 4 22 6L23 5Q29 10 29 17Q28 28 15 29Q2 28 1 16Z" fill="url(#ff)" />
    <circle cx="15" cy="15.500" r="6" fill="#7b3fd6" />
    <path d="M3 9Q8 8 12 10L16 12Q13 14 10 14Q9 19 14 20Q18 20 20 17Q21 24 13 24Q3 22 3 9Z" fill="#ff9420" />
  </App30>
);
const Word = () => (
  <App30>
    <path d="M7 1H29.500V8H7Z" fill="#41a5ee" />
    <path d="M7 8H29.500V15H7Z" fill="#2b7cd3" />
    <path d="M7 15H29.500V22H7Z" fill="#185abd" />
    <path d="M7 22H29.500V29H7Z" fill="#103f91" />
    <rect x="0.500" y="7" width="15.500" height="16" rx="1" fill="#185abd" />
    <text x="8.200" y="19.500" textAnchor="middle" fontSize="12" fontWeight="700" fill="#fff" fontFamily="Open Sans, sans-serif">W</text>
  </App30>
);
const Perf = () => (
  <App30>
    <path d="M1 12L7 9V24L1 22Z" fill="#b8b8b8" />
    <path d="M1 13H4V15H1Z" fill="#59c95a" />
    <path d="M8 4L28 7L26 22L4 20Z" fill="#d6d9db" stroke="#aaa" />
    <path d="M9 6L26 9L25 19L6 18Z" fill="#f3f7fa" />
    <path d="M8 16L11 15L13 9L15 16L17 13L19 17L21 12L23 17" stroke="#4a8ec2" />
    <ellipse cx="18" cy="26" rx="6" ry="3" fill="#c9c9c9" />
    <path d="M16 21H21V26H16Z" fill="#b5b5b5" />
  </App30>
);
const Brackets = () => (
  <App30>
    <rect width="30" height="30" rx="2" fill="#179fd9" />
    <rect x="4" y="4" width="22" height="22" rx="1.500" fill="#fff" />
    <path d="M6.500 7H13V10H10.800V20H13V23H6.500ZM23.500 7H17V10H19.200V20H17V23H23.500Z" fill="#4a4a4a" />
  </App30>
);
const Teams = () => (
  <App30>
    <circle cx="16" cy="5.500" r="5" fill="#7b83eb" />
    <circle cx="25.500" cy="7" r="3.300" fill="#5059c9" />
    <path d="M20 12H30V20Q29 25 23 25Z" fill="#5059c9" />
    <path d="M9 12H23V21Q22 29 15 29Q9 28 9 22Z" fill="#7b83eb" />
    <rect x="0.500" y="7" width="15.500" height="16" rx="1" fill="#4b53bc" />
    <text x="8.200" y="19.500" textAnchor="middle" fontSize="12.500" fontWeight="700" fill="#fff" fontFamily="Open Sans, sans-serif">T</text>
  </App30>
);
const Photos = () => (
  <App30>
    <rect x="1" y="1" width="28" height="28" fill="#1ca2ea" />
    <path d="M12 20L20 12L29 22V29H12Z" fill="#6c7fd8" />
    <path d="M1 20L9 11L27 29H1Z" fill="#0d3f7d" />
    <circle cx="19.500" cy="7.500" r="2.800" fill="#fff" />
  </App30>
);
const Origin = () => (
  <App30>
    <path d="M16 0.500Q13 3 13.500 5Q24 4 26 13Q26 22 14 30Q16 27 15.500 25Q5 25 4 16Q4 6 16 0.500Z" fill="#ea5b25" />
    <circle cx="15" cy="15" r="4.200" fill="#432a33" />
  </App30>
);

function TaskButton({ children, line = true, active = false, split = false }: { children: React.ReactNode; line?: boolean; active?: boolean; split?: boolean }) {
  if (active) {
    return (
      <div className="flex h-[50px] w-[62px]">
        <div className="flex h-[50px] w-[56px] items-center justify-center border-b-[3px] border-[#76b9ed] bg-[#6b595f] pl-[5px] pt-[3px]">{children}</div>
        <div className="h-[50px] w-[5px] border-b-[3px] border-l border-b-[#5f97c4] border-l-[#3c2b31] bg-[#5a464c]" />
      </div>
    );
  }
  return (
    <div className="flex h-[50px] w-[62px] flex-col items-center justify-between">
      <div className="flex h-[47px] items-center pt-[3px]">{children}</div>
      {line && (
        <div className="flex h-[3px] w-[51px]">
          <div className="h-[3px] grow bg-[#76b9ed]" />
          {split && <div className="h-[3px] w-[10px] bg-[#5587b0]" />}
        </div>
      )}
    </div>
  );
}

function Taskbar() {
  return (
    <div className="flex h-[50px] bg-[linear-gradient(90deg,#33292a_0px,#2e2428_60px,#3a2637_490px,#2d2f40_550px,#41283a_680px,#4e2b36_860px,#40303a_960px,#3c3035_1080px,#33292e_1160px,#293a44_1290px,#3d2b38_1360px,#4a2a33_1400px,#482b36_1500px,#4a2d3a_1620px,#43282f_1700px,#3f262b_1920px)]">
      <div className="flex w-[60px] items-center justify-center">
        <svg width="20" height="20" viewBox="0 0 20 20" fill="#fff">
          <path d="M0 2.700L8.300 1.500V9.500H0ZM9.300 1.300L20 0V9.500H9.300ZM0 10.500H8.300V18.500L0 17.300ZM9.300 10.500H20V20L9.300 18.700Z" />
        </svg>
      </div>
      <div className="flex h-[50px] w-[430px] items-center border border-[#5a5a5a] bg-[#333] pl-[14px]">
        <svg width="21" height="21" viewBox="0 0 21 21" fill="none" stroke="#f0f0f0" strokeWidth="1.500">
          <circle cx="13" cy="7.500" r="6.500" />
          <path d="M8.500 12L0.500 20" />
        </svg>
        <span className="ml-[14px] whitespace-nowrap pb-px font-['Open_Sans',sans-serif] text-[18px] leading-6 tracking-[-0.1px] text-[#d4d4d4]">Type here to search</span>
      </div>
      <div className="flex w-[63px] items-center justify-center pr-[4px]">
        <svg width="20" height="20" viewBox="0 0 20 20" fill="none" stroke="#f2f2f2" strokeWidth="1.100">
          <path d="M0.500 0V3.500H13V0M0.500 6.500H13V14H0.500ZM0.500 20V16.500H13V20M18.500 0V5M18.500 11V20" />
          <rect x="17" y="6.500" width="3" height="3" fill="#fff" stroke="none" />
        </svg>
      </div>
      <TaskButton>
        <FaEdgeLegacy size={26} color="#0a7bd8" />
      </TaskButton>
      <TaskButton split>
        <Explorer />
      </TaskButton>
      <TaskButton line={false}>
        <Store />
      </TaskButton>
      <TaskButton>
        <Spotify />
      </TaskButton>
      <TaskButton line={false}>
        <Mail />
      </TaskButton>
      <TaskButton line={false}>
        <Discord />
      </TaskButton>
      <TaskButton>
        <Msi />
      </TaskButton>
      <TaskButton>
        <WhatsApp />
      </TaskButton>
      <TaskButton>
        <Firefox />
      </TaskButton>
      <TaskButton>
        <Word />
      </TaskButton>
      <TaskButton>
        <Perf />
      </TaskButton>
      <TaskButton>
        <Brackets />
      </TaskButton>
      <TaskButton>
        <Teams />
      </TaskButton>
      <TaskButton>
        <Photos />
      </TaskButton>
      <TaskButton active>
        <FusionMark size={30} label />
      </TaskButton>
      <TaskButton>
        <Origin />
      </TaskButton>
      <div className="ml-auto flex items-center font-['Open_Sans',sans-serif] text-[14px] text-[#ececec]">
        <svg width="16" height="10" viewBox="0 0 16 10" fill="none" stroke="#f2f2f2" strokeWidth="1.300">
          <path d="M0.500 9L8 1.500L15.500 9" />
        </svg>
        <svg className="ml-[12px]" width="20" height="14" viewBox="0 0 20 14" fill="none" stroke="#f2f2f2" strokeWidth="1.200">
          <path d="M6 2.500H18V12.500H3V8M18.500 5.500H19.500V9.500H18.500" />
          <path d="M1 0.500V3M4 0.500V3M0.500 3H4.500V5.500L2.500 7L0.500 5.500Z" />
          <path d="M5.500 5H15.500V10.500H5.500Z" fill="#f2f2f2" stroke="none" />
        </svg>
        <svg className="ml-[13px]" width="16" height="16" viewBox="0 0 16 16" fill="none" strokeWidth="1.300">
          <path d="M1 16Q1 1 16 1" stroke="#94878b" />
          <path d="M4.500 16Q4.500 5 16 5M8 16Q8 9 16 9" stroke="#f2f2f2" />
          <circle cx="13.500" cy="13.800" r="2" fill="#fff" />
        </svg>
        <svg className="ml-[11px]" width="20" height="16" viewBox="0 0 20 16" fill="none" strokeWidth="1.200">
          <path d="M0.600 5.500H3L7 1.500V14.500L3 10.500H0.600Z" stroke="#f2f2f2" />
          <path d="M9.500 5.500Q11 8 9.500 10.500" stroke="#f2f2f2" />
          <path d="M12.500 3.500Q16 8 12.500 12.500M15.500 1Q21 8 15.500 15" stroke="#94878b" />
        </svg>
        <svg className="ml-[10px]" width="20" height="13" viewBox="0 0 20 13">
          <path d="M3 8Q3 2 9 0.500Q15 0 17 6L12 9H3Z" fill="#a9a2a4" />
          <path d="M3.500 13Q0 12 0.200 9.500Q0.500 6.500 4 6.500Q6 3.500 9.500 5L13 7.500Q16 5 18 7Q20.500 8 20 10.500Q19.500 13 17 13Z" fill="#f6f6f6" />
        </svg>
        <span className="ml-[13px] w-[31px] tracking-[-0.1px]">ENG</span>
        <div className="ml-[3px] flex w-[87px] flex-col items-center whitespace-nowrap leading-[18px]">
          <span className="mb-[5px] tracking-[-0.1px]">1:39 AM</span>
          <span className="tracking-[0.02px]">7/25/2020</span>
        </div>
        <div className="relative ml-[15px] h-[30px] w-[30px]">
          <svg width="30" height="30" viewBox="0 0 30 30" fill="none">
            <path d="M0 5H20V20H7L7 24L3 20H0Z" fill="#fff" />
            <path d="M4 9H16M4 12.500H16M4 16H12" stroke="#43282f" strokeWidth="1.200" />
          </svg>
          <div className="absolute left-[9px] top-[15px] flex size-5 items-center justify-center rounded-full border border-[#999] bg-[#2c2c2e] text-[13px] font-bold leading-none text-white">5</div>
        </div>
        <div className="ml-[15px] h-[50px] w-[6px] border-l border-[#85757a]" />
      </div>
    </div>
  );
}

export default function App() {
  return (
    <div className="h-[1080px] w-[1920px] overflow-hidden bg-[#15151b] font-['Liberation_Sans',Arial,sans-serif]">
      <div className="h-[6px] border-b-[3px] border-t border-b-[#111119] border-t-[#050506] bg-[#3a3a3c]" />
      <div className="ml-[2px] w-[1915px]">
        <TitleBar />
        <DocumentBar />
        <Ribbon />
        <Canvas />
        <Timeline />
      </div>
      <Taskbar />
    </div>
  );
}
